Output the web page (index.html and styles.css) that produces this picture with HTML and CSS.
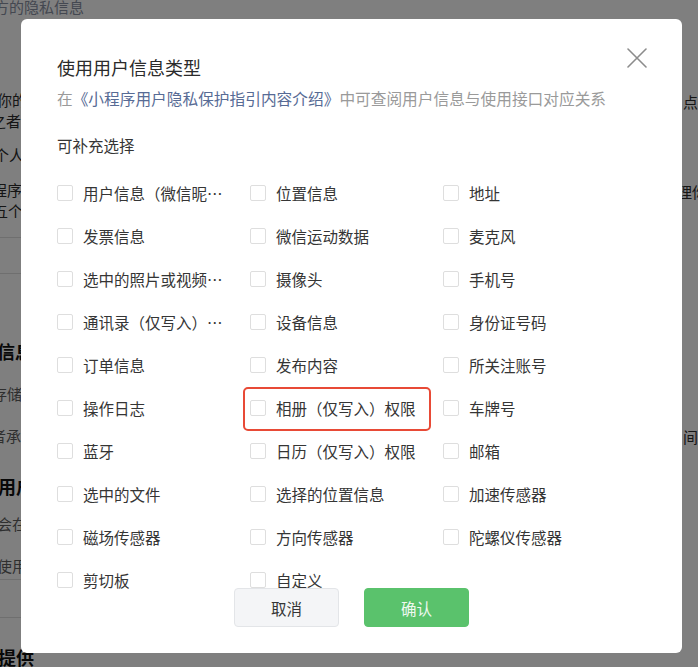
FILE: index.html
```html
<!DOCTYPE html>
<html lang="zh-CN">
<head>
<meta charset="utf-8">
<title>使用用户信息类型</title>
<link rel="stylesheet" href="styles.css">
</head>
<body>
<div class="page">
  <div class="col-left">
    <div class="bg-link t1">方的隐私信息</div>
    <div class="bg-text t2">你的</div>
    <div class="bg-text t3">之者</div>
    <div class="bg-text t4">个人</div>
    <div class="bg-text t5">程序</div>
    <div class="bg-text t6">五个</div>
    <div class="bg-rule r1"></div>
    <div class="bg-rule r2"></div>
    <div class="bg-head t7">信息</div>
    <div class="bg-sub t8">存储</div>
    <div class="bg-sub t9">者承</div>
    <div class="bg-head t10">用户</div>
    <div class="bg-sub t11">会在</div>
    <div class="bg-sub t12">使用</div>
    <div class="bg-rule r3"></div>
    <div class="bg-rule r4"></div>
    <div class="bg-head t13">提供</div>
  </div>
  <div class="col-right">
    <div class="bg-text u1">点击</div>
    <div class="bg-text u2">理你</div>
    <div class="bg-text u3">间</div>
  </div>
</div>

<div class="mask">
  <div class="modal">
    <div class="modal-head">
      <h2 class="modal-title">使用用户信息类型</h2>
      <button class="close" aria-label="关闭">
        <svg width="20" height="20" viewBox="0 0 20 20"><path d="M1 1 L19 19 M19 1 L1 19" stroke="#8c8c8c" stroke-width="1.6" fill="none" stroke-linecap="round"/></svg>
      </button>
    </div>
    <p class="modal-desc">在<a class="link">《小程序用户隐私保护指引内容介绍》</a>中可查阅用户信息与使用接口对应关系</p>
    <p class="section-label">可补充选择</p>
    <div class="options">
      <label class="opt"><span class="box"></span><span class="txt">用户信息（微信昵…</span></label>
      <label class="opt"><span class="box"></span><span class="txt">位置信息</span></label>
      <label class="opt"><span class="box"></span><span class="txt">地址</span></label>
      <label class="opt"><span class="box"></span><span class="txt">发票信息</span></label>
      <label class="opt"><span class="box"></span><span class="txt">微信运动数据</span></label>
      <label class="opt"><span class="box"></span><span class="txt">麦克风</span></label>
      <label class="opt"><span class="box"></span><span class="txt">选中的照片或视频…</span></label>
      <label class="opt"><span class="box"></span><span class="txt">摄像头</span></label>
      <label class="opt"><span class="box"></span><span class="txt">手机号</span></label>
      <label class="opt"><span class="box"></span><span class="txt">通讯录（仅写入）…</span></label>
      <label class="opt"><span class="box"></span><span class="txt">设备信息</span></label>
      <label class="opt"><span class="box"></span><span class="txt">身份证号码</span></label>
      <label class="opt"><span class="box"></span><span class="txt">订单信息</span></label>
      <label class="opt"><span class="box"></span><span class="txt">发布内容</span></label>
      <label class="opt"><span class="box"></span><span class="txt">所关注账号</span></label>
      <label class="opt"><span class="box"></span><span class="txt">操作日志</span></label>
      <label class="opt"><span class="box"></span><span class="txt">相册（仅写入）权限</span></label>
      <label class="opt"><span class="box"></span><span class="txt">车牌号</span></label>
      <label class="opt"><span class="box"></span><span class="txt">蓝牙</span></label>
      <label class="opt"><span class="box"></span><span class="txt">日历（仅写入）权限</span></label>
      <label class="opt"><span class="box"></span><span class="txt">邮箱</span></label>
      <label class="opt"><span class="box"></span><span class="txt">选中的文件</span></label>
      <label class="opt"><span class="box"></span><span class="txt">选择的位置信息</span></label>
      <label class="opt"><span class="box"></span><span class="txt">加速传感器</span></label>
      <label class="opt"><span class="box"></span><span class="txt">磁场传感器</span></label>
      <label class="opt"><span class="box"></span><span class="txt">方向传感器</span></label>
      <label class="opt"><span class="box"></span><span class="txt">陀螺仪传感器</span></label>
      <label class="opt"><span class="box"></span><span class="txt">剪切板</span></label>
      <label class="opt"><span class="box"></span><span class="txt">自定义</span></label>
    </div>
    <div class="modal-foot">
      <button class="btn btn-cancel">取消</button>
      <button class="btn btn-ok">确认</button>
    </div>
    <div class="highlight"></div>
  </div>
</div>
</body>
</html>
```

FILE: styles.css
```css
* { box-sizing: border-box; }

html, body {
  margin: 0;
  padding: 0;
  background: #ffffff;
  font-family: "Noto Sans CJK SC", "Noto Sans", sans-serif;
}

body {
  width: 698px;
  height: 667px;
  overflow: hidden;
  position: relative;
}

/* ---------- background page ---------- */
.page {
  display: flex;
  justify-content: space-between;
  width: 698px;
  height: 667px;
  overflow: hidden;
}

.col-left {
  margin-left: -6px;
  width: 120px;
  display: flex;
  flex-direction: column;
}

.col-right {
  width: 40px;
  margin-right: -25px;
  display: flex;
  flex-direction: column;
}

.bg-link, .bg-text, .bg-sub, .bg-head {
  line-height: 20px;
  height: 20px;
  white-space: nowrap;
  font-size: 15px;
}

.bg-link { color: #8890a2; }
.bg-text { color: #2a2a2a; }
.bg-sub { color: #5e5e5e; }
.bg-head { color: #111111; font-size: 18px; font-weight: 700; }

.bg-rule { height: 1px; background: #dedede; width: 120px; margin-left: -10px; }

.t1 { margin-top: -3px; }
.t2 { margin-top: 73px; margin-left: 3px; }
.t3 { margin-top: 1px; margin-left: -3px; }
.t4 { margin-top: 14px; }
.t5 { margin-top: 15px; margin-left: -2px; }
.t6 { margin-top: 1px; margin-left: -1px; }
.r1 { margin-top: 16px; }
.r2 { margin-top: 36px; }
.t7 { margin-top: 67px; margin-left: 3px; }
.t8 { margin-top: 23px; margin-left: -2px; }
.t9 { margin-top: 22px; margin-left: -3px; }
.t10 { margin-top: 30px; margin-left: 4px; }
.t11 { margin-top: 18px; margin-left: 3px; }
.t12 { margin-top: 22px; margin-left: 3px; }
.r3 { margin-top: 3px; }
.r4 { margin-top: 38px; }
.t13 { margin-top: 30px; margin-left: 4px; }

.u1 { margin-top: 92px; }
.u2 { margin-top: 70px; margin-left: -6px; }
.u3 { margin-top: 225px; }

/* ---------- mask + modal ---------- */
.mask {
  position: fixed;
  inset: 0;
  background: rgba(0, 0, 0, 0.5);
  padding: 19px 0 0 21px;
}

.modal {
  position: relative;
  width: 661px;
  background: #ffffff;
  border-radius: 6px;
  padding: 36px 35px 26px 36px;
  display: flex;
  flex-direction: column;
}

.modal-head {
  display: flex;
  justify-content: space-between;
  align-items: flex-start;
}

.modal-title {
  margin: 0;
  font-size: 18px;
  line-height: 24px;
  font-weight: 400;
  color: #2b2b2b;
}

.close {
  margin-top: -7px;
  width: 20px;
  height: 20px;
  padding: 0;
  border: 0;
  background: transparent;
  display: flex;
}

.modal-desc {
  margin: 9px 0 0;
  font-size: 15.7px;
  line-height: 22px;
  color: #9a9a9a;
  white-space: nowrap;
}

.link {
  color: #576b95;
  text-decoration: none;
}

.section-label {
  margin: 24px 0 0;
  font-size: 15.5px;
  line-height: 22px;
  color: #353535;
}

.options {
  margin-top: 15.5px;
  display: grid;
  grid-template-columns: repeat(3, 193px);
  grid-auto-rows: 43px;
}

.opt {
  display: flex;
  align-items: center;
  gap: 10px;
  font-size: 15.5px;
  color: #353535;
}

.box {
  flex: none;
  width: 16px;
  height: 16px;
  border: 1px solid #dedede;
  border-radius: 2px;
  background: #fff;
}

.txt {
  white-space: nowrap;
  line-height: 22px;
}

.modal-foot {
  position: relative;
  z-index: 1;
  margin-top: -13.5px;
  display: flex;
  justify-content: center;
  gap: 25px;
  margin-left: -1px;
}

.btn {
  width: 105px;
  height: 39px;
  border-radius: 4px;
  font-family: "Noto Sans CJK SC", "Noto Sans", sans-serif;
  font-size: 15.5px;
  padding: 0;
}

.btn-cancel {
  background: #f4f5f7;
  border: 1px solid #e3e5e8;
  color: #353535;
}

.btn-ok {
  background: #5ac26c;
  border: 1px solid #5ac26c;
  color: #eef8f0;
}

.highlight {
  position: absolute;
  left: 222px;
  top: 368px;
  width: 188px;
  height: 44px;
  border: 2px solid #e84a36;
  border-radius: 5px;
  pointer-events: none;
}
```
